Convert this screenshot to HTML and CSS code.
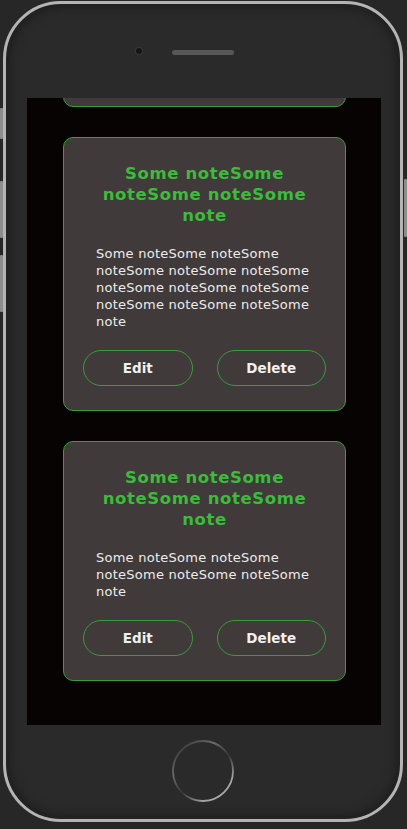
FILE: index.html
```html
<!DOCTYPE html>
<html lang="en">
<head>
<meta charset="utf-8">
<title>Notes</title>
<link rel="stylesheet" href="styles.css">
</head>
<body>
<div class="phone">
  <span class="side-btn left b1"></span>
  <span class="side-btn left b2"></span>
  <span class="side-btn left b3"></span>
  <span class="side-btn right b4"></span>
  <div class="phone-top">
    <div class="cam-col"><span class="camera"></span></div>
    <span class="speaker"></span>
    <div></div>
  </div>
  <div class="screen">
    <div class="notes">
      <div class="card">
        <h2 class="card-title">Some noteSome noteSome noteSome note</h2>
        <p class="card-body">Some noteSome noteSome noteSome noteSome noteSome noteSome noteSome noteSome noteSome noteSome noteSome note</p>
        <div class="card-actions"><button class="btn">Edit</button><button class="btn">Delete</button></div>
      </div>
      <div class="card">
        <h2 class="card-title">Some noteSome noteSome noteSome note</h2>
        <p class="card-body">Some noteSome noteSome noteSome noteSome noteSome noteSome noteSome noteSome noteSome noteSome noteSome note</p>
        <div class="card-actions"><button class="btn">Edit</button><button class="btn">Delete</button></div>
      </div>
      <div class="card">
        <h2 class="card-title">Some noteSome noteSome noteSome note</h2>
        <p class="card-body">Some noteSome noteSome noteSome noteSome noteSome note</p>
        <div class="card-actions"><button class="btn">Edit</button><button class="btn">Delete</button></div>
      </div>
    </div>
  </div>
  <div class="phone-bottom">
    <svg class="home" width="64" height="64" viewBox="0 0 64 64">
      <defs>
        <linearGradient id="hg" x1="0.1" y1="0" x2="0.9" y2="1">
          <stop offset="0" stop-color="#8a8a8a" stop-opacity="0.1"/>
          <stop offset="0.3" stop-color="#9a9a9a" stop-opacity="0.6"/>
          <stop offset="0.55" stop-color="#9a9a9a" stop-opacity="0.1"/>
          <stop offset="0.8" stop-color="#b0b0b0" stop-opacity="0.9"/>
          <stop offset="1" stop-color="#b0b0b0" stop-opacity="1"/>
        </linearGradient>
      </defs>
      <circle cx="32" cy="32" r="30" fill="none" stroke="url(#hg)" stroke-width="1.8"/>
    </svg>
  </div>
</div>
</body>
</html>
```
FILE: styles.css
```css
html, body {
  margin: 0;
  padding: 0;
  background: #272727;
  width: 407px;
  height: 829px;
  overflow: hidden;
}
body {
  font-family: "DejaVu Sans", sans-serif;
}
.phone {
  position: relative;
  box-sizing: border-box;
  width: 400px;
  height: 821px;
  margin: 1px 0 0 3px;
  border: 3px solid #b4b4b4;
  border-radius: 58px;
  background: #2a2a2a;
  box-shadow: inset 0 0 0 2px #222, inset 0 0 14px rgba(0,0,0,0.55);
  display: flex;
  flex-direction: column;
  align-items: center;
}
.side-btn {
  position: absolute;
  width: 3px;
  background: #8d8d8d;
  border-radius: 1px;
}
.side-btn.left { left: -6px; }
.side-btn.right { right: -7px; }
.b1 { top: 104px; height: 31px; }
.b2 { top: 177px; height: 57px; }
.b3 { top: 251px; height: 57px; }
.b4 { top: 175px; height: 58px; }
.phone-top {
  height: 94px;
  width: 100%;
  display: grid;
  grid-template-columns: 1fr auto 1fr;
  align-items: center;
}
.cam-col {
  display: flex;
  justify-content: flex-end;
  padding-right: 30px;
}
.camera {
  width: 6px;
  height: 6px;
  border-radius: 50%;
  background: #151518;
  box-shadow: 0 0 0 1px #383838;
}
.speaker {
  width: 62px;
  height: 5px;
  border-radius: 3px;
  background: #575757;
  margin-top: 2px;
}
.screen {
  width: 354px;
  height: 627px;
  margin-left: 2px;
  background: #070303;
  overflow: hidden;
  display: flex;
  flex-direction: column;
  justify-content: flex-end;
}
.notes {
  display: flex;
  flex-direction: column;
  gap: 30px;
  padding: 0 35px 44px 36px;
}
.card {
  flex-shrink: 0;
  box-sizing: border-box;
  background: #403a3a;
  border: 1px solid #3b9c3b;
  border-radius: 10px;
  padding: 25px 19px 24px;
  display: flex;
  flex-direction: column;
}
.card-title {
  margin: 0;
  padding: 0 16px;
  font-size: 16.5px;
  line-height: 21px;
  font-weight: bold;
  color: #3cbb3c;
  text-align: center;
  letter-spacing: 0.6px;
}
.card-body {
  margin: 19px 0 0;
  padding: 0 12px 0 13px;
  font-size: 13px;
  line-height: 17px;
  color: #ececec;
  letter-spacing: 0.25px;
}
.card-actions {
  margin-top: 20px;
  display: flex;
  gap: 24px;
}
.btn {
  width: 110px;
  height: 36px;
  box-sizing: border-box;
  background: transparent;
  border: 1px solid #3b9c3b;
  border-radius: 18px;
  color: #f0f0f0;
  font-family: "DejaVu Sans", sans-serif;
  font-weight: bold;
  font-size: 13.5px;
  padding: 0;
}
.phone-bottom {
  flex: 1;
  width: 100%;
  display: flex;
  align-items: center;
  justify-content: center;
}
.home {
  display: block;
  margin-top: -2px;
}
```
